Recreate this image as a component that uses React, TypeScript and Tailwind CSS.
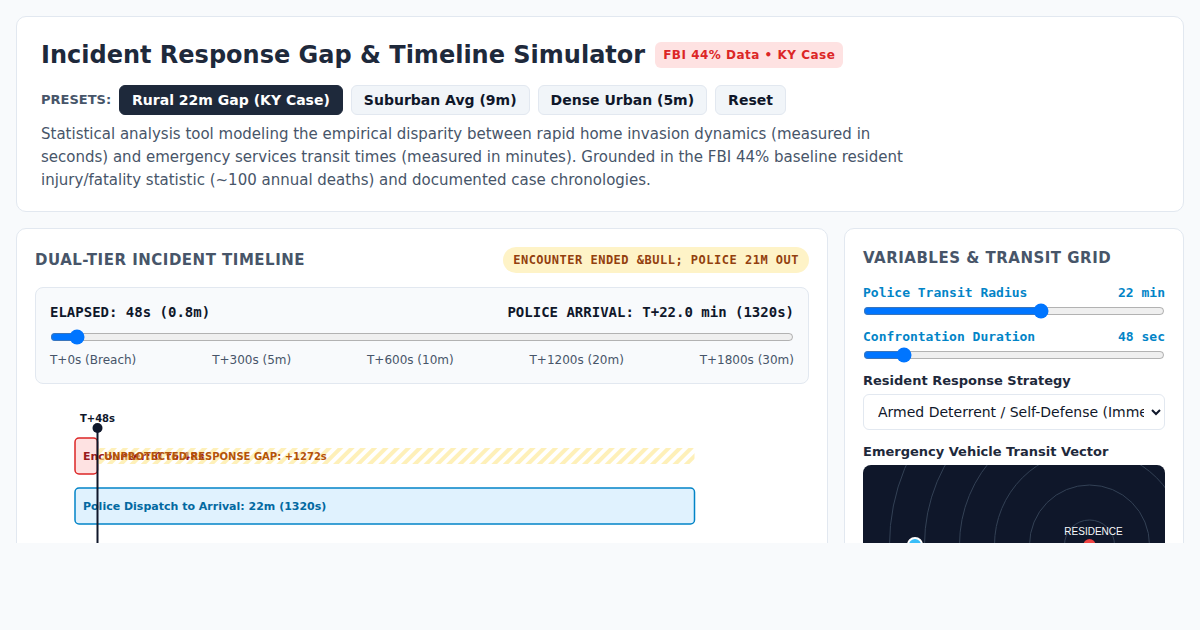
import { useState } from "react";

const presets = ["Rural 22m Gap (KY Case)", "Suburban Avg (9m)", "Dense Urban (5m)", "Reset"];
const ticks = ["T+0s (Breach)", "T+300s (5m)", "T+600s (10m)", "T+1200s (20m)", "T+1800s (30m)"];
const rings = [25, 60, 95, 130, 165, 200];

function TimelineChart() {
  return (
    <svg className="mt-4 block h-[260px] w-full font-['DejaVu_Sans',sans-serif]" role="img" aria-label="Incident timeline">
      <defs>
        <pattern id="gap" width="8" height="8" patternUnits="userSpaceOnUse" patternTransform="rotate(45)">
          <rect width="4" height="8" fill="#fde68a" fillOpacity="0.6" />
        </pattern>
      </defs>
      <rect x="40" y="38" width="22.5" height="36" rx="4" fill="#fee2e2" stroke="#dc2626" strokeWidth="1.5" />
      <text x="48" y="60" fontSize="11" fontWeight="700" fill="#991b1b">Encounter: 0 to 48s</text>
      <rect x="62.5" y="48" width="597" height="16" rx="2" fill="url(#gap)" />
      <text x="69" y="60" fontSize="10" fontWeight="700" fill="#b45309">UNPROTECTED RESPONSE GAP: +1272s</text>
      <rect x="40" y="88" width="619.5" height="36" rx="4" fill="#e0f2fe" stroke="#0284c7" strokeWidth="1.5" />
      <text x="48" y="110" fontSize="11" fontWeight="700" fill="#0369a1">Police Dispatch to Arrival: 22m (1320s)</text>
      <line x1="62.5" y1="28" x2="62.5" y2="220" stroke="#0f172a" strokeWidth="2" />
      <circle cx="62.5" cy="28" r="5" fill="#0f172a" />
      <text x="62.5" y="22" fontSize="10" fontWeight="700" textAnchor="middle" fill="#0f172a">T+48s</text>
    </svg>
  );
}

function TransitMap() {
  return (
    <div className="h-40 overflow-hidden rounded-lg bg-[#0f172a]">
      <svg className="block h-full w-full font-['Liberation_Sans',sans-serif]" role="img" aria-label="Emergency vehicle transit map">
        <svg x="75%" y="50%" overflow="visible">
          {rings.map((r) => (
            <circle key={r} r={r} fill="none" stroke="#334155" strokeWidth="1" />
          ))}
          <circle r="6" fill="#ef4444" />
          <text x="4" y="-10" fontSize="10" textAnchor="middle" fill="#f8fafc">RESIDENCE</text>
        </svg>
        <circle cx="52" cy="80" r="7" fill="#38bdf8" stroke="#fff" strokeWidth="2" />
      </svg>
    </div>
  );
}

export default function App() {
  const [preset, setPreset] = useState(0);
  const [elapsed, setElapsed] = useState(48);
  const [transit, setTransit] = useState(22);
  const [duration, setDuration] = useState(48);

  return (
    <div className="h-screen bg-[#f8fafc] pb-[87px] font-['DejaVu_Sans',sans-serif] text-[#0f172a]">
      <main className="flex h-full flex-col gap-4 overflow-hidden p-4 pb-0">
        <header className="shrink-0 rounded-[10px] border border-[#e2e8f0] bg-white px-6 pt-5 pb-[19px]">
          <div className="flex items-center gap-[10px]">
            <h1 className="text-2xl leading-9 font-bold text-[#1e293b]">Incident Response Gap &amp; Timeline Simulator</h1>
            <span className="rounded-md bg-[#fee2e2] px-2 py-1 text-xs leading-[18px] font-bold tracking-[0.5px] text-[#dc2626]">FBI 44% Data • KY Case</span>
          </div>
          <div className="mt-3 flex items-center gap-2">
            <span className="text-[13px] leading-5 font-bold text-[#475569]">PRESETS:</span>
            {presets.map((name, i) => (
              <button
                key={name}
                type="button"
                onClick={() => setPreset(i)}
                className={
                  i === preset
                    ? "h-[30px] rounded-md border border-[#1e293b] bg-[#1e293b] px-3 text-sm leading-4 font-bold text-white"
                    : "h-[30px] rounded-md border border-[#e2e8f0] bg-[#f1f5f9] px-3 text-sm leading-4 font-bold text-[#0f172a]"
                }
              >
                {name}
              </button>
            ))}
          </div>
          <p className="mt-2 max-w-[900px] text-[15px] leading-[23px] text-[#475569]">
            Statistical analysis tool modeling the empirical disparity between rapid home invasion dynamics (measured in seconds) and
            emergency services transit times (measured in minutes). Grounded in the FBI 44% baseline resident injury/fatality
            statistic (~100 annual deaths) and documented case chronologies.
          </p>
        </header>

        <div className="grid shrink-0 grid-cols-[minmax(0,1fr)_340px] gap-4">
          <section className="rounded-[10px] border border-[#e2e8f0] bg-white p-[18px]">
            <div className="flex items-center justify-between">
              <h2 className="text-[15px] leading-[22px] font-bold tracking-[0.5px] text-[#475569]">DUAL-TIER INCIDENT TIMELINE</h2>
              <span className="rounded-full bg-[#fef3c7] px-[10px] py-1 font-['DejaVu_Sans_Mono',monospace] text-xs leading-[18px] font-bold tracking-[0.5px] text-[#92400e]">
                ENCOUNTER ENDED &amp;BULL; POLICE 21M OUT
              </span>
            </div>
            <div className="mt-[14px] rounded-lg border border-[#e2e8f0] bg-[#f8fafc] p-[14px]">
              <div className="flex justify-between font-['DejaVu_Sans_Mono',monospace] text-sm leading-[21px] font-bold">
                <label htmlFor="elapsed">ELAPSED: 48s (0.8m)</label>
                <span>POLICE ARRIVAL: T+22.0 min (1320s)</span>
              </div>
              <input
                id="elapsed"
                type="range"
                min={0}
                max={1800}
                value={elapsed}
                onChange={(e) => setElapsed(Number(e.target.value))}
                className="mt-[6px] block h-4 w-full"
              />
              <div className="mt-[6px] flex justify-between text-xs leading-[18px] text-[#475569]">
                {ticks.map((t) => (
                  <span key={t}>{t}</span>
                ))}
              </div>
            </div>
            <TimelineChart />
          </section>

          <aside className="rounded-[10px] border border-[#e2e8f0] bg-white p-[18px]">
            <h2 className="text-[15px] leading-[22px] font-bold tracking-[0.5px] text-[#475569]">VARIABLES &amp; TRANSIT GRID</h2>
            <div className="mt-[14px] flex justify-between font-['DejaVu_Sans_Mono',monospace] text-[13px] leading-5 font-bold text-[#0284c7]">
              <label htmlFor="transit">Police Transit Radius</label>
              <span>22 min</span>
            </div>
            <input
              id="transit"
              type="range"
              min={3}
              max={35}
              value={transit}
              onChange={(e) => setTransit(Number(e.target.value))}
              className="block h-4 w-full"
            />
            <div className="mt-2 flex justify-between font-['DejaVu_Sans_Mono',monospace] text-[13px] leading-5 font-bold text-[#0284c7]">
              <label htmlFor="duration">Confrontation Duration</label>
              <span>48 sec</span>
            </div>
            <input
              id="duration"
              type="range"
              min={15}
              max={300}
              value={duration}
              onChange={(e) => setDuration(Number(e.target.value))}
              className="block h-4 w-full"
            />
            <label htmlFor="strategy" className="mt-2 block text-[13px] leading-5 font-bold text-[#1e293b]">
              Resident Response Strategy
            </label>
            <select id="strategy" className="mt-[3px] block h-9 w-full rounded-md border border-[#e2e8f0] bg-white pr-1 pl-[10px] text-sm">
              <option>Armed Deterrent / Self-Defense (Immediate)</option>
              <option>Shelter in Place</option>
              <option>Evacuate</option>
            </select>
            <h3 className="mt-3 mb-[3px] text-[13px] leading-5 font-bold text-[#1e293b]">Emergency Vehicle Transit Vector</h3>
            <TransitMap />
          </aside>
        </div>
      </main>
    </div>
  );
}
